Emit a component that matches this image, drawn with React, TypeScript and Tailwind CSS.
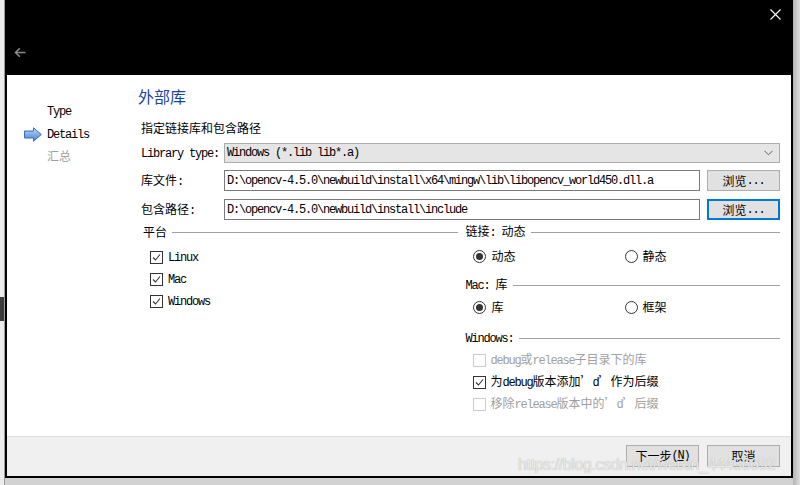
import clsx from "clsx";

const mono = "font-['Liberation_Mono','DejaVu_Sans_Mono',monospace] tracking-[-1.2px] whitespace-pre";

// ASCII runs get the half-width mono face, the rest falls to the CJK font
function T({ s }: { s: string }) {
  const parts = s.split(/([\x20-\x7e]+)/).filter((p) => p !== "");
  return (
    <>
      {parts.map((p, i) =>
        /^[\x20-\x7e]+$/.test(p) ? (
          <span key={i} className={mono}>
            {p}
          </span>
        ) : (
          <span key={i}>{p}</span>
        )
      )}
    </>
  );
}

function Check({ checked, disabled }: { checked?: boolean; disabled?: boolean }) {
  return (
    <span
      className={clsx(
        "flex h-[13px] w-[13px] shrink-0 items-center justify-center border bg-white",
        disabled ? "border-[#cccccc]" : "border-[#333333]"
      )}
    >
      {checked && (
        <svg width="9" height="9" viewBox="0 0 9 9">
          <path d="M1 4.5 L3.5 7 L8 1.5" fill="none" stroke="#333333" strokeWidth="1.1" />
        </svg>
      )}
    </span>
  );
}

function Radio({ on }: { on?: boolean }) {
  return (
    <span className="flex h-[13px] w-[13px] shrink-0 items-center justify-center rounded-full border border-[#333333] bg-white">
      {on && <span className="h-[7px] w-[7px] rounded-full bg-[#333333]" />}
    </span>
  );
}

function GroupTitle({ s }: { s: string }) {
  return (
    <div className="flex h-[14px] items-center">
      <span className="whitespace-nowrap">
        <T s={s} />
      </span>
      <span className="ml-[5px] h-px flex-1 bg-[#a0a0a0]" />
    </div>
  );
}

function CheckRow({ label, checked, disabled }: { label: string; checked?: boolean; disabled?: boolean }) {
  return (
    <div className="flex h-[22px] items-center gap-[5px] pl-[7px]">
      <Check checked={checked} disabled={disabled} />
      <span className={clsx(disabled && "text-[#a0a0a0]")}>
        <T s={label} />
      </span>
    </div>
  );
}

function RadioRow({ a, b }: { a: string; b: string }) {
  return (
    <div className="flex h-[22px] items-center">
      <div className="flex w-[159px] items-center gap-[6px] pl-[7px]">
        <Radio on />
        <span>{a}</span>
      </div>
      <div className="flex items-center gap-[5px]">
        <Radio />
        <span>{b}</span>
      </div>
    </div>
  );
}

function NavArrow() {
  return (
    <svg width="18" height="15" viewBox="0 0 18 15">
      <defs>
        <linearGradient id="ga" x1="0" y1="0" x2="0" y2="1">
          <stop offset="0" stopColor="#c4dcf8" />
          <stop offset="1" stopColor="#3f7fd6" />
        </linearGradient>
      </defs>
      <path
        d="M0.5 4 H9.5 V0.8 L17.3 7.5 L9.5 14.2 V11 H0.5 Z"
        fill="url(#ga)"
        stroke="#3a6cc0"
        strokeWidth="1"
        strokeLinejoin="round"
      />
    </svg>
  );
}

function Btn({ children, focus, className }: { children: React.ReactNode; focus?: boolean; className?: string }) {
  return (
    <div
      className={clsx(
        "flex items-center justify-center bg-[#e1e1e1]",
        focus ? "border-2 border-[#0078d7]" : "border border-[#adadad]",
        className
      )}
    >
      {children}
    </div>
  );
}

export default function App() {
  return (
    <div className="relative flex h-[485px] w-[800px] overflow-hidden bg-[#d2d2d2] font-['Noto_Sans_CJK_SC','Noto_Sans',sans-serif] text-[12px] leading-[14px] text-black">
      {/* desktop strip on the left */}
      <div className="flex w-[5px] flex-col border-r border-[#9a9a9a] bg-[#ececec]">
        <div className="h-[297px]" />
        <div className="h-[24px] bg-[#3c3c3c]" />
      </div>

      <div className="flex w-[788px] flex-col">
        <div className="flex h-[478px] flex-col border-x-2 border-b-2 border-black">
          {/* header */}
          <div className="flex h-[75px] flex-col bg-black">
            <div className="flex justify-end pr-[10px] pt-[9px]">
              <svg width="11" height="11" viewBox="0 0 11 11">
                <path d="M0.5 0.5 L10.5 10.5 M10.5 0.5 L0.5 10.5" stroke="#ffffff" strokeWidth="1.1" />
              </svg>
            </div>
            <div className="mt-[27px] pl-[7px]">
              <svg width="12" height="11" viewBox="0 0 12 11">
                <path d="M11.5 5.5 H1.5 M5.8 1.2 L1.5 5.5 L5.8 9.8" fill="none" stroke="#8c8c8c" strokeWidth="1.5" />
              </svg>
            </div>
          </div>

          {/* body */}
          <div className="flex h-[361px] bg-white">
            <nav className="w-[131px] pl-[17px] pt-[26px]">
              <div className="flex h-[22px] items-center pl-[23px]">
                <T s="Type" />
              </div>
              <div className="flex h-[22px] items-center">
                <NavArrow />
                <span className="ml-[5px]">
                  <T s="Details" />
                </span>
              </div>
              <div className="flex h-[22px] items-center pl-[23px] text-[#a0a0a0]">汇总</div>
            </nav>

            <main className="flex-1 pr-[11px] pt-[11px]">
              <h1 className="h-[20px] text-[16px] leading-[20px] text-[#1a44a4]">外部库</h1>
              <div className="pl-[3px]">
                <div className="mt-[15px] h-[14px]">指定链接库和包含路径</div>

                <div className="mt-[8px] flex h-[20px] items-center">
                  <span className="w-[83px] shrink-0">
                    <T s="Library type:" />
                  </span>
                  <div className="flex h-full flex-1 items-center justify-between border border-[#adadad] bg-[#e5e5e5] pl-[2px] pr-[6px]">
                    <T s="Windows (*.lib lib*.a)" />
                    <svg width="9" height="6" viewBox="0 0 9 6">
                      <path d="M0.5 0.8 L4.5 4.8 L8.5 0.8" fill="none" stroke="#606060" strokeWidth="1" />
                    </svg>
                  </div>
                </div>

                <div className="mt-[7px] flex h-[21px] items-center gap-[7px]">
                  <span className="w-[76px] shrink-0">
                    <T s="库文件:" />
                  </span>
                  <div className="flex h-full flex-1 items-center border border-[#7a7a7a] bg-white pl-[2px]">
                    <T s="D:\opencv-4.5.0\newbuild\install\x64\mingw\lib\libopencv_world450.dll.a" />
                  </div>
                  <Btn className="h-full w-[73px]">
                    <T s="浏览..." />
                  </Btn>
                </div>

                <div className="mt-[8px] flex h-[21px] items-center gap-[7px]">
                  <span className="w-[76px] shrink-0">
                    <T s="包含路径:" />
                  </span>
                  <div className="flex h-full flex-1 items-center border border-[#7a7a7a] bg-white pl-[2px]">
                    <T s="D:\opencv-4.5.0\newbuild\install\include" />
                  </div>
                  <Btn focus className="h-full w-[73px]">
                    <T s="浏览..." />
                  </Btn>
                </div>

                <div className="mt-[5px] grid grid-cols-2 gap-x-[8px] pl-[2px]">
                  <div>
                    <GroupTitle s="平台" />
                    <div className="mt-[7px]">
                      <CheckRow label="Linux" checked />
                      <CheckRow label="Mac" checked />
                      <CheckRow label="Windows" checked />
                    </div>
                  </div>
                  <div>
                    <GroupTitle s="链接: 动态" />
                    <div className="mt-[6px]">
                      <RadioRow a="动态" b="静态" />
                    </div>
                    <div className="mt-[11px]">
                      <GroupTitle s="Mac: 库" />
                    </div>
                    <div className="mt-[4px]">
                      <RadioRow a="库" b="框架" />
                    </div>
                    <div className="mt-[13px]">
                      <GroupTitle s="Windows:" />
                    </div>
                    <div className="mt-[4px]">
                      <CheckRow label="debug或release子目录下的库" disabled />
                      <CheckRow label="为debug版本添加’d’作为后缀" checked />
                      <CheckRow label="移除release版本中的’d’后缀" disabled />
                    </div>
                  </div>
                </div>
              </div>
            </main>
          </div>

          {/* footer */}
          <div className="flex flex-1 justify-end gap-[8px] border-t border-[#dfdfdf] bg-[#f0f0f0] pr-[11px] pt-[8px]">
            <Btn className="h-[22px] w-[73px]">
              下一步<span className={mono}>(<u>N</u>)</span>
            </Btn>
            <Btn className="h-[22px] w-[73px]">取消</Btn>
          </div>
        </div>
      </div>

      <div className="w-[7px] bg-gradient-to-r from-[#b4b4b4] to-[#dedede]" />

      <div className="pointer-events-none absolute left-[518px] top-[455px] font-['Liberation_Sans',sans-serif] text-[16px] leading-[20px] tracking-[-0.4px] text-[#e8e8e8] [text-shadow:0_0_1px_#a8a8a8]">
        https://blog.csdn.net/weixin_44456692
      </div>
    </div>
  );
}
